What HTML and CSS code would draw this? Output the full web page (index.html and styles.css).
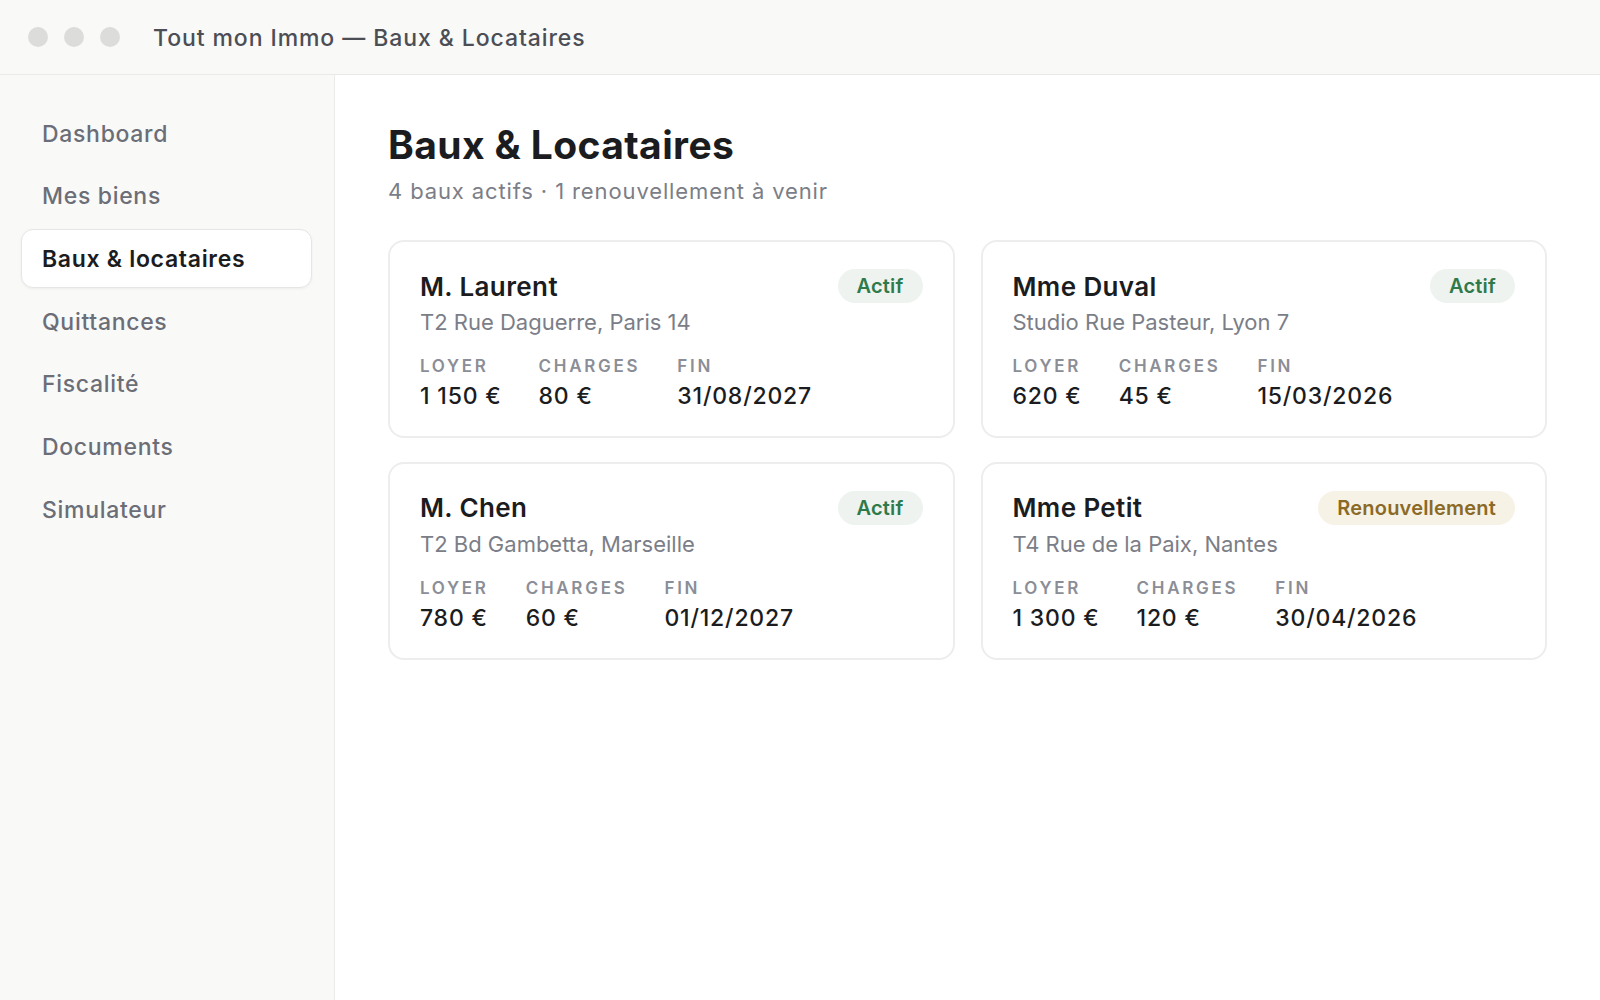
FILE: index.html
```html
<!DOCTYPE html>
<html lang="fr">
<head>
<meta charset="UTF-8">
<meta name="viewport" content="width=device-width, initial-scale=1.0">
<title>Tout mon Immo — Baux &amp; Locataires</title>
<link rel="stylesheet" href="styles.css">
</head>
<body>

<div class="titlebar">
    <div class="dots">
        <span class="dot"></span>
        <span class="dot"></span>
        <span class="dot"></span>
    </div>
    <div class="window-title">Tout mon Immo — Baux &amp; Locataires</div>
</div>

<div class="app">
    <nav class="sidebar">
        <a class="nav-item">Dashboard</a>
        <a class="nav-item">Mes biens</a>
        <a class="nav-item active">Baux &amp; locataires</a>
        <a class="nav-item">Quittances</a>
        <a class="nav-item">Fiscalité</a>
        <a class="nav-item">Documents</a>
        <a class="nav-item">Simulateur</a>
    </nav>

    <main class="main">
        <h1>Baux &amp; Locataires</h1>
        <p class="subtitle">4 baux actifs · 1 renouvellement à venir</p>

        <div class="leases">
            <div class="card">
                <div class="card-head">
                    <div class="tenant">M. Laurent</div>
                    <span class="badge ok">Actif</span>
                </div>
                <div class="address">T2 Rue Daguerre, Paris 14</div>
                <div class="stats">
                    <div class="stat"><div class="label">Loyer</div><div class="value">1 150 €</div></div>
                    <div class="stat"><div class="label">Charges</div><div class="value">80 €</div></div>
                    <div class="stat"><div class="label">Fin</div><div class="value">31/08/2027</div></div>
                </div>
            </div>

            <div class="card">
                <div class="card-head">
                    <div class="tenant">Mme Duval</div>
                    <span class="badge ok">Actif</span>
                </div>
                <div class="address">Studio Rue Pasteur, Lyon 7</div>
                <div class="stats">
                    <div class="stat"><div class="label">Loyer</div><div class="value">620 €</div></div>
                    <div class="stat"><div class="label">Charges</div><div class="value">45 €</div></div>
                    <div class="stat"><div class="label">Fin</div><div class="value">15/03/2026</div></div>
                </div>
            </div>

            <div class="card">
                <div class="card-head">
                    <div class="tenant">M. Chen</div>
                    <span class="badge ok">Actif</span>
                </div>
                <div class="address">T2 Bd Gambetta, Marseille</div>
                <div class="stats">
                    <div class="stat"><div class="label">Loyer</div><div class="value">780 €</div></div>
                    <div class="stat"><div class="label">Charges</div><div class="value">60 €</div></div>
                    <div class="stat"><div class="label">Fin</div><div class="value">01/12/2027</div></div>
                </div>
            </div>

            <div class="card">
                <div class="card-head">
                    <div class="tenant">Mme Petit</div>
                    <span class="badge warn">Renouvellement</span>
                </div>
                <div class="address">T4 Rue de la Paix, Nantes</div>
                <div class="stats">
                    <div class="stat"><div class="label">Loyer</div><div class="value">1 300 €</div></div>
                    <div class="stat"><div class="label">Charges</div><div class="value">120 €</div></div>
                    <div class="stat"><div class="label">Fin</div><div class="value">30/04/2026</div></div>
                </div>
            </div>
        </div>
    </main>
</div>

</body>
</html>
```

FILE: styles.css
```css
* {
    box-sizing: border-box;
}
body {
    margin: 0;
    padding: 0;
    font-family: Inter, "Noto Sans", Arial, sans-serif;
    color: #1b1c20;
    background-color: #fff;
}
.titlebar {
    height: 75px;
    display: flex;
    align-items: center;
    padding-left: 28px;
    background-color: #f9f9f7;
    border-bottom: 1px solid #e9e9e6;
}
.dots {
    display: flex;
    gap: 16px;
}
.dot {
    width: 20px;
    height: 20px;
    border-radius: 50%;
    background-color: #dcdcdb;
}
.window-title {
    margin-left: 33px;
    padding-top: 2px;
    font-size: 23px;
    font-weight: 500;
    letter-spacing: 0.04em;
    color: #4c4e56;
}
.app {
    display: flex;
    height: 925px;
}
.sidebar {
    width: 335px;
    flex-shrink: 0;
    padding: 29px 22px 0 21px;
    background-color: #f9f9f8;
    border-right: 1px solid #ebebe9;
}
.nav-item {
    display: flex;
    align-items: center;
    height: 59px;
    margin-bottom: 3.7px;
    padding: 0 20px;
    border: 1px solid transparent;
    border-radius: 12px;
    font-size: 23px;
    font-weight: 500;
    letter-spacing: 0.03em;
    color: #6b6e77;
    cursor: pointer;
}
.nav-item.active {
    background-color: #fff;
    border-color: #e6e6e4;
    box-shadow: 0 1px 3px rgba(0, 0, 0, 0.05);
    color: #1b1c20;
    font-weight: 600;
}
.main {
    flex: 1;
    padding: 47px 53px 0 53px;
}
.main h1 {
    margin: 0;
    font-size: 39px;
    line-height: 1.2;
    font-weight: 700;
    letter-spacing: 0.01em;
}
.subtitle {
    margin: 8px 0 0;
    font-size: 22px;
    line-height: 1.3;
    letter-spacing: 0.04em;
    color: #7b7e87;
}
.leases {
    display: grid;
    grid-template-columns: 1fr 1fr;
    column-gap: 26px;
    row-gap: 24px;
    margin-top: 35px;
}
.card {
    padding: 27px 30px 24px;
    border: 2px solid #ededed;
    border-radius: 16px;
    background-color: #fff;
}
.card-head {
    display: flex;
    justify-content: space-between;
    align-items: center;
    height: 34px;
}
.tenant {
    font-size: 26px;
    font-weight: 600;
    line-height: 1.2;
    letter-spacing: 0.015em;
}
.badge {
    height: 34px;
    display: inline-flex;
    align-items: center;
    padding: 0 19px;
    border-radius: 17px;
    font-size: 20px;
    font-weight: 600;
    letter-spacing: 0.01em;
}
.badge.ok {
    background-color: #eef3ef;
    color: #2f7a4b;
}
.badge.warn {
    background-color: #f7f2e6;
    color: #8a6a26;
}
.address {
    margin-top: 5px;
    font-size: 22px;
    line-height: 1.3;
    color: #7b7e87;
}
.stats {
    display: flex;
    gap: 37px;
    margin-top: 18px;
}
.label {
    font-size: 17px;
    line-height: 1.3;
    font-weight: 600;
    letter-spacing: 0.16em;
    text-transform: uppercase;
    color: #8b8e96;
}
.value {
    margin-top: 5px;
    font-size: 23px;
    line-height: 1.3;
    font-weight: 500;
    letter-spacing: 0.035em;
}
```
